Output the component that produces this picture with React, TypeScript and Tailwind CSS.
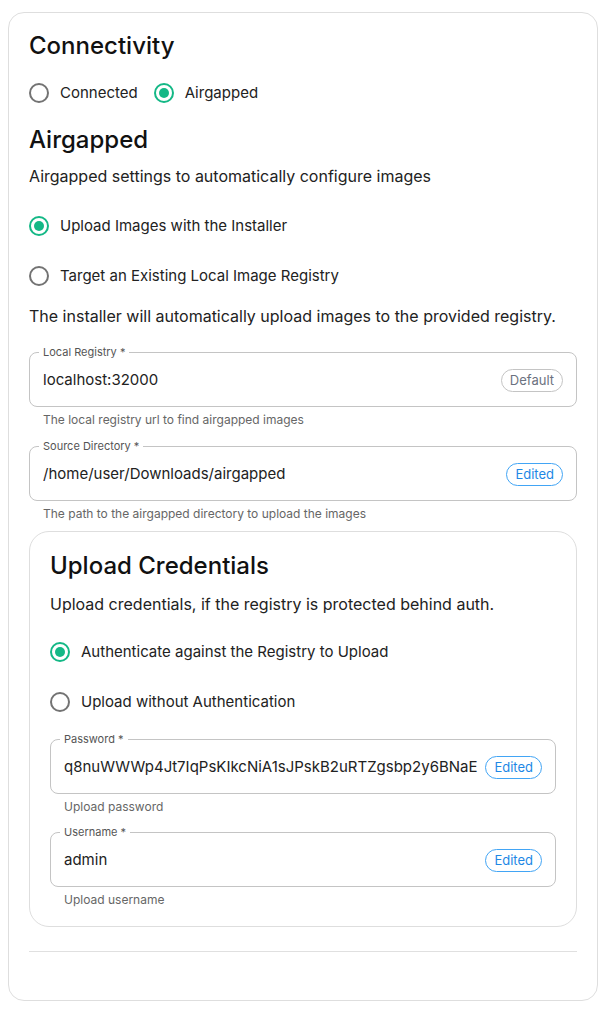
import React from "react";

function Radio({ checked, label, className = "" }: { checked: boolean; label: string; className?: string }) {
  return (
    <div className={`flex items-center h-6 ${className}`}>
      <span
        className={`flex items-center justify-center w-5 h-5 rounded-full border-2 ${
          checked ? "border-[#14b886]" : "border-[#737373]"
        }`}
      >
        {checked && <span className="w-[10px] h-[10px] rounded-full bg-[#14b886]" />}
      </span>
      <span className="ml-[11px] text-[15px] text-[#222]">{label}</span>
    </div>
  );
}

function Field({
  label,
  value,
  badge,
  helper,
  className = "",
}: {
  label: string;
  value: string;
  badge: "Default" | "Edited";
  helper: string;
  className?: string;
}) {
  return (
    <div className={className}>
      <div className="relative flex items-center h-[55px] rounded-lg border border-[#c4c4c4] pl-[13px] pr-[13px] pt-[2px]">
        <span className="absolute -top-[8px] left-[9px] bg-white px-1 text-[11px] leading-[14px] text-[#555]">
          {label} *
        </span>
        <span className="flex-1 min-w-0 overflow-hidden whitespace-nowrap text-[15px] text-[#222]">{value}</span>
        <span
          className={`ml-[6px] shrink-0 flex items-center h-[23px] rounded-full border px-[8px] text-[13px] ${
            badge === "Edited" ? "border-[#42a5f5] text-[#1e88e5]" : "border-[#c4c4c4] text-[#6b7280]"
          }`}
        >
          {badge}
        </span>
      </div>
      <div className="mt-[5px] pl-[14px] text-[12px] leading-4 text-[#666]">{helper}</div>
    </div>
  );
}

export default function App() {
  return (
    <div className="bg-white pl-2 pr-[10px] pt-3 pb-[14px] font-['Inter',sans-serif] text-[#111]">
      <div className="rounded-2xl border border-[#dedede] px-5 pt-[17px] pb-[48px]">
        <h1 className="text-[24px] leading-8 font-medium">Connectivity</h1>
        <div className="mt-[19px] flex items-center">
          <Radio checked={false} label="Connected" />
          <Radio checked={true} label="Airgapped" className="ml-4" />
        </div>
        <h2 className="mt-[19px] text-[24px] leading-8 font-medium">Airgapped</h2>
        <p className="mt-[8px] text-[16px] leading-6 text-[#222]">Airgapped settings to automatically configure images</p>
        <Radio checked={true} label="Upload Images with the Installer" className="mt-[26px]" />
        <Radio checked={false} label="Target an Existing Local Image Registry" className="mt-[26px]" />
        <p className="mt-[16px] text-[16px] leading-6 text-[#222]">
          The installer will automatically upload images to the provided registry.
        </p>
        <Field
          className="mt-[24px]"
          label="Local Registry"
          value="localhost:32000"
          badge="Default"
          helper="The local registry url to find airgapped images"
        />
        <Field
          className="mt-[18px]"
          label="Source Directory"
          value="/home/user/Downloads/airgapped"
          badge="Edited"
          helper="The path to the airgapped directory to upload the images"
        />
        <div className="mt-[9px] rounded-[20px] border border-[#dedede] px-5 pt-[18px] pb-[18px]">
          <h2 className="text-[24px] leading-8 font-medium">Upload Credentials</h2>
          <p className="mt-[10px] text-[16px] leading-6 text-[#222]">
            Upload credentials, if the registry is protected behind auth.
          </p>
          <Radio checked={true} label="Authenticate against the Registry to Upload" className="mt-[24px]" />
          <Radio checked={false} label="Upload without Authentication" className="mt-[26px]" />
          <Field
            className="mt-[25px]"
            label="Password"
            value="q8nuWWWp4Jt7IqPsKIkcNiA1sJPskB2uRTZgsbp2y6BNaE"
            badge="Edited"
            helper="Upload password"
          />
          <Field className="mt-[17px]" label="Username" value="admin" badge="Edited" helper="Upload username" />
        </div>
        <div className="mt-[24px] h-px bg-[#e0e0e0]" />
      </div>
    </div>
  );
}
